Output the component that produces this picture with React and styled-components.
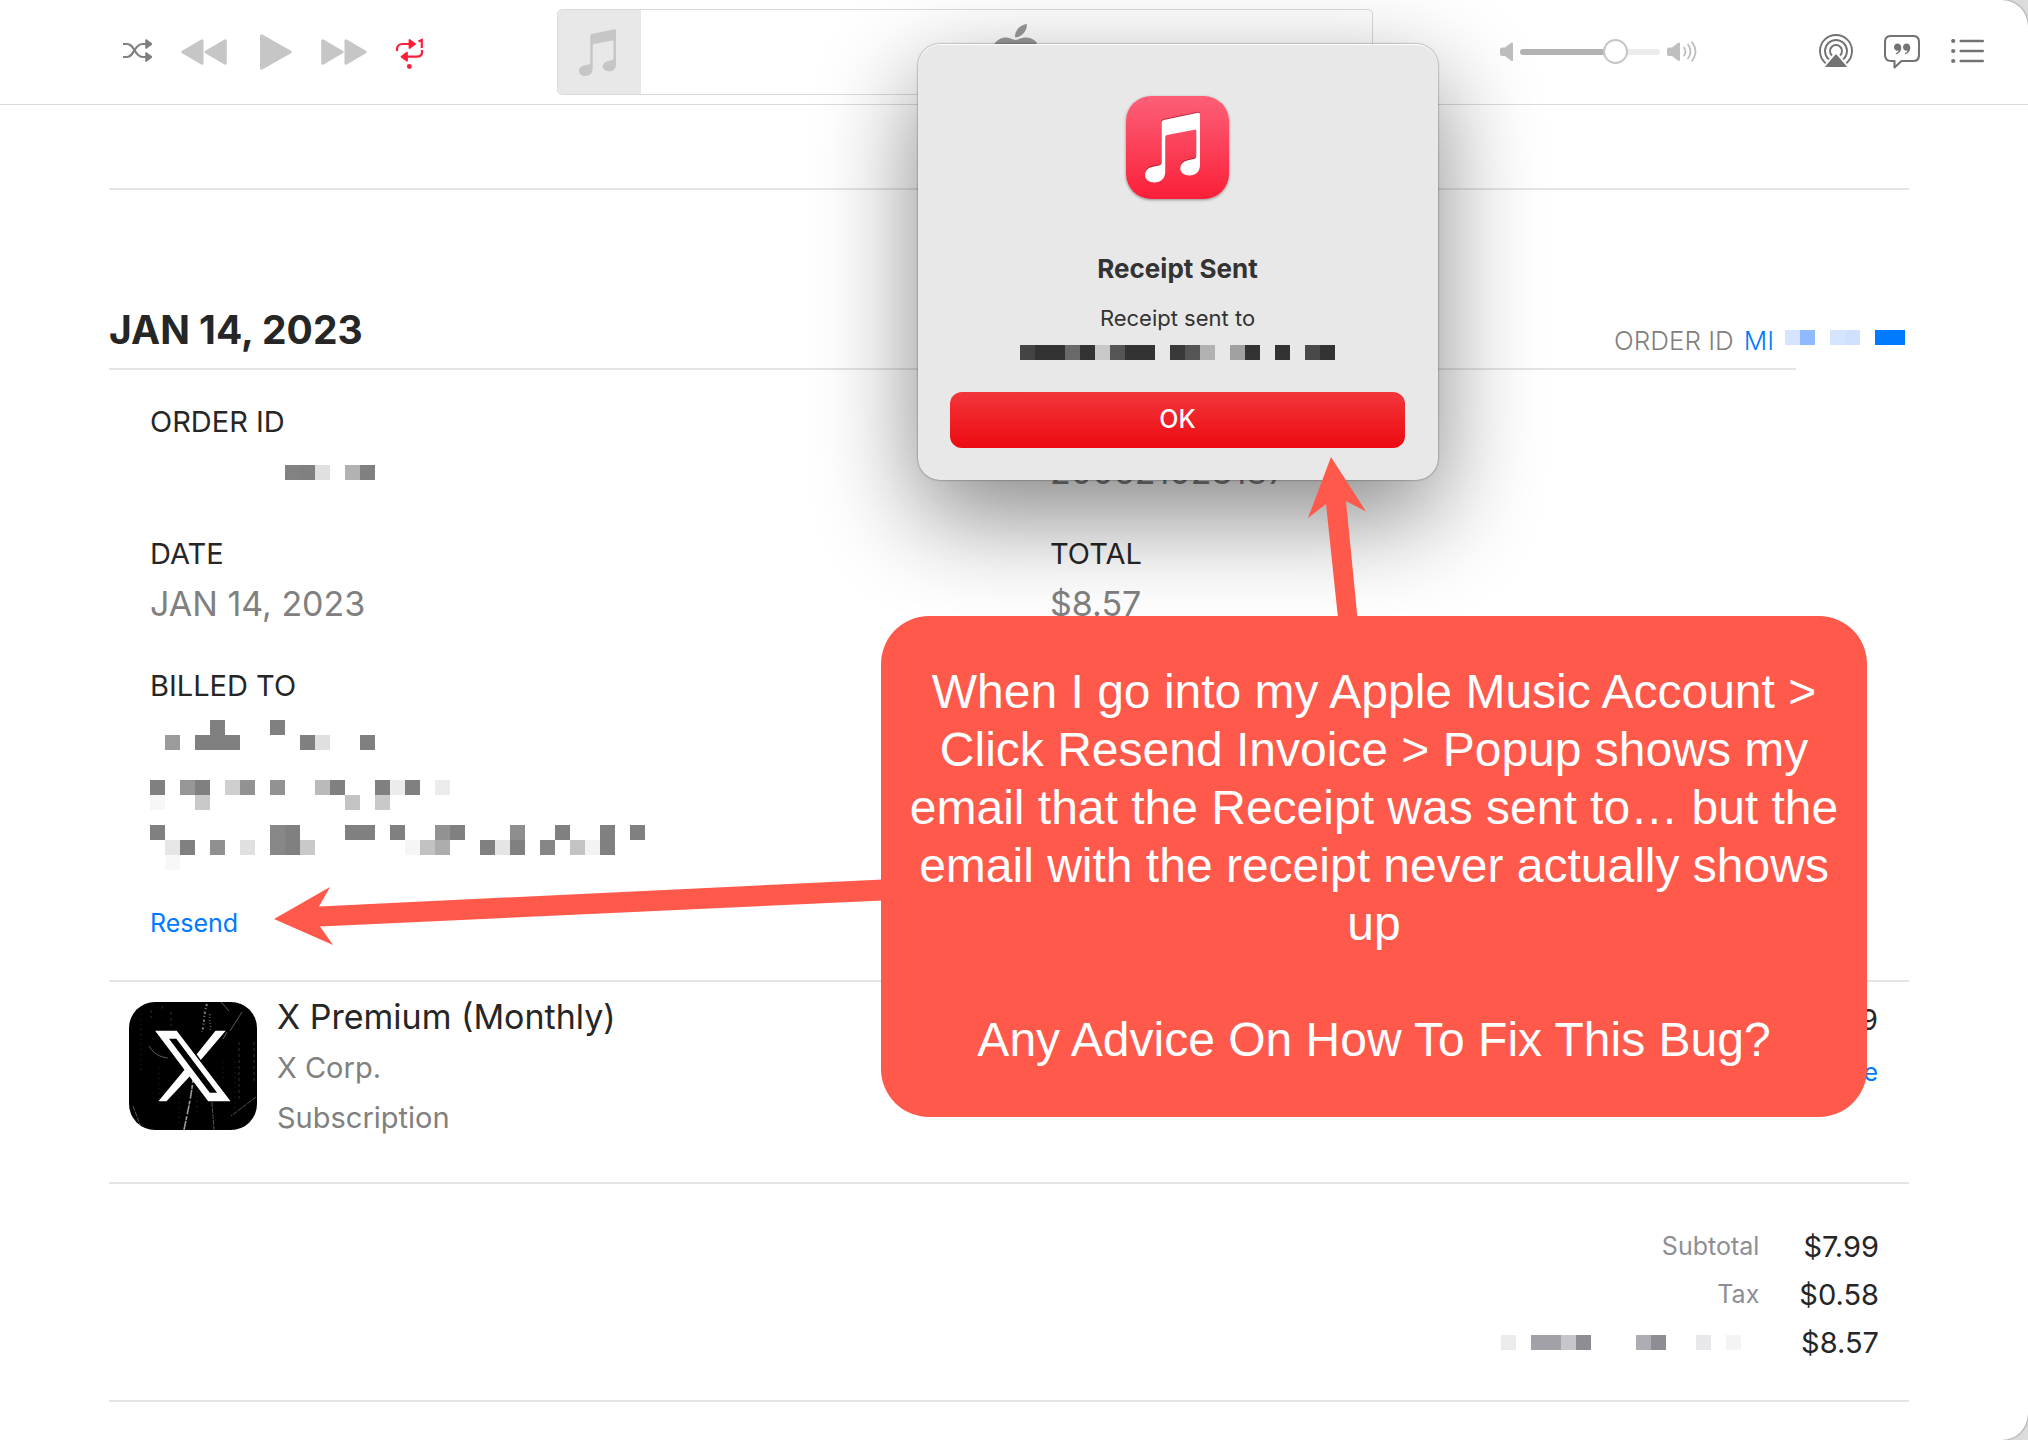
import React from 'react';
import styled, { createGlobalStyle } from 'styled-components';
import { FaApple } from 'react-icons/fa';

const colours = {
  text: '#262626',
  grey: '#808080',
  label: '#8e8e93',
  rule: '#e5e5e5',
  link: '#007aff',
  red: '#fc1f3a',
  control: '#c6c6c6',
  icon: '#737373',
  callout: '#ff594b',
};

const GlobalStyle = createGlobalStyle`
  * {
    box-sizing: border-box;
  }

  body {
    margin: 0;
    background-color: #dcdcdc;
    color: ${colours.text};
    font-family: Inter, "Liberation Sans", sans-serif;
  }

  p, h1, h2, h3, dl, dt, dd {
    margin: 0;
    font-weight: 400;
  }
`;

const Window = styled.div`
  position: relative;
  min-height: 100vh;
  overflow: hidden;
  background-color: white;
  border-radius: 0 26px 26px 0;
  box-shadow: 0 0 2px rgba(0, 0, 0, 0.6);
`;

/* ---------- toolbar ---------- */

const Toolbar = styled.header`
  display: flex;
  align-items: center;
  height: 105px;
  padding: 0 44px 0 123px;
  border-bottom: 1px solid #dadada;
`;

const ButtonGroup = styled.div`
  display: flex;
  align-items: center;
  gap: ${({ $gap }) => $gap}px;
`;

const IconButton = styled.button`
  display: flex;
  padding: 0;
  border: 0;
  background: none;
  color: ${({ $colour }) => $colour || colours.control};
`;

const Display = styled.div`
  display: flex;
  flex: 1;
  height: 86px;
  margin: 0 127px 0 133px;
  border: 1px solid #dadada;
  border-radius: 5px;
  overflow: hidden;
`;

const Artwork = styled.div`
  display: flex;
  align-items: center;
  justify-content: center;
  width: 83px;
  padding-right: 4px;
  background-color: #e8e8e8;
  color: ${colours.control};
`;

const Screen = styled.div`
  display: flex;
  flex: 1;
  align-items: center;
  justify-content: center;
  padding-left: 16px;
  color: #999;
`;

const Volume = styled.div`
  display: flex;
  align-items: center;
  gap: 7px;
  margin-right: 122px;
  color: #bfbfbf;
`;

const VolumeSlider = styled.input`
  appearance: none;
  width: 140px;
  height: 25px;
  margin: 0;
  background: none;

  &::-webkit-slider-runnable-track {
    height: 6px;
    border-radius: 3px;
    background: linear-gradient(to right, #b3b3b3 68%, #ececec 68%);
  }

  &::-webkit-slider-thumb {
    appearance: none;
    width: 25px;
    height: 25px;
    margin-top: -10px;
    border: 2px solid ${colours.control};
    border-radius: 50%;
    background-color: white;
  }
`;

const ShuffleIcon = () => (
  <svg width="29" height="26" viewBox="0 0 29 26" fill="none" stroke="currentColor" strokeWidth="2.200">
    <path d="M0 5h4c3.500 0 5 2 7.500 6.300S16 18 19.500 18H23" />
    <path d="M0 18h4c3.500 0 5-2.400 7.500-6.700S16 5 19.500 5H23" />
    <path d="M23 1l5.500 4-5.500 4zM23 14l5.500 4-5.500 4z" fill="currentColor" strokeWidth="1.600" strokeLinejoin="round" />
  </svg>
);

const RewindIcon = () => (
  <svg width="46" height="26" viewBox="0 0 46 26" fill="currentColor" stroke="currentColor" strokeWidth="3" strokeLinejoin="round">
    <path d="M1.800 13L21 1.700v22.600zM25 13L44.300 1.700v22.600z" />
  </svg>
);

const PlayIcon = () => (
  <svg width="36" height="36" viewBox="0 0 36 36" fill="currentColor" stroke="currentColor" strokeWidth="3" strokeLinejoin="round">
    <path d="M5.500 1.700v32.600L34.300 18z" />
  </svg>
);

const ForwardIcon = () => (
  <svg width="46" height="26" viewBox="0 0 46 26" fill="currentColor" stroke="currentColor" strokeWidth="3" strokeLinejoin="round">
    <path d="M44.200 13L25 1.700v22.600zM21 13L1.700 1.700v22.600z" />
  </svg>
);

const RepeatOneIcon = () => (
  <svg width="28" height="34" viewBox="0 -4 28 34" fill="none" stroke="currentColor" strokeWidth="2.200">
    <path d="M1 12v-1.500C1 7 3 5 6.500 5H14" />
    <path d="M26 11v2c0 3-1.500 4.700-5 4.700H10" />
    <path d="M13.500 1l5.500 4-5.500 4zM11 13.700v8l-5.500-4z" fill="currentColor" strokeWidth="1.800" strokeLinejoin="round" />
    <path d="M22.500 2.600L25.800 1v8" />
    <circle cx="13.300" cy="27.500" r="2.400" fill="currentColor" stroke="none" />
  </svg>
);

const NoteIcon = ({ width, height, fill = 'currentColor' }) => (
  <svg width={width} height={height} viewBox="0 0 55 70" fill={fill}>
    <path d="M16.700 10Q16.700 8 18.700 7.500L53 .3Q55 0 55 2V52C55 59 51 63 44.500 63C39 63 35.300 60 35.300 56C35.300 51 39 48.500 44 47.500L48.500 46.600Q51.300 46 51.300 43V18.500Q51.300 16.800 49.500 17.200L22 22.400Q20.300 22.700 20.300 24.500V58.500C20.300 66 16 70 9.500 70C4 70 0 67 0 62.500C0 57.500 3.500 55 9 54L14 53Q16.700 52.400 16.700 49.500Z" />
  </svg>
);

const speakerPath = 'M0 7.500Q0 5.500 2 5.500H5L11.500 .5Q13 0 13 1.500V18Q13 19.500 11.500 19L5 14H2Q0 14 0 12Z';

const SpeakerIcon = () => (
  <svg width="13" height="20" viewBox="0 0 13 20" fill="currentColor">
    <path d={speakerPath} />
  </svg>
);

const SpeakerLoudIcon = () => (
  <svg width="30" height="22" viewBox="0 -1 30 22" fill="currentColor">
    <path d={speakerPath} />
    <g fill="none" stroke="currentColor" strokeWidth="1.800" strokeLinecap="round">
      <path d="M17 5.500q3 4 0 8" />
      <path d="M21 2.500q5 7 0 14" />
      <path d="M25 0q7 9.500 0 19" />
    </g>
  </svg>
);

const AirPlayIcon = () => (
  <svg width="34" height="36" viewBox="0 0 34 36" fill="none" stroke="currentColor" strokeWidth="1.900">
    <circle cx="17" cy="17" r="16" />
    <circle cx="17" cy="17" r="11" />
    <circle cx="17" cy="17" r="6" />
    <path d="M17 16.500L32 35H2z" fill="white" stroke="none" />
    <path d="M17 21l10 11.500H7z" fill="currentColor" strokeWidth="1.200" strokeLinejoin="round" />
  </svg>
);

const LyricsIcon = () => (
  <svg width="36" height="34" viewBox="0 0 36 34" fill="none" stroke="currentColor" strokeWidth="2.100" strokeLinejoin="round">
    <path d="M7 1h22q6 0 6 6v13q0 6-6 6H17.500l-7 6.500V26H7q-6 0-6-6V7q0-6 6-6z" />
    <g fill="currentColor" stroke="none">
      <path d="M13.600 8.600c2.200 0 3.700 1.800 3.700 4.200 0 3.400-2.200 5.700-5.200 6.500l-.5-.9c1.600-.7 2.700-1.600 3-2.900-2.500.6-4.600-1-4.600-3.300 0-2.100 1.500-3.600 3.600-3.600z" />
      <path d="M22.600 8.600c2.200 0 3.700 1.800 3.700 4.200 0 3.400-2.200 5.700-5.200 6.500l-.5-.9c1.600-.7 2.700-1.600 3-2.900-2.500.6-4.600-1-4.600-3.300 0-2.100 1.500-3.600 3.600-3.600z" />
    </g>
  </svg>
);

const QueueIcon = () => (
  <svg width="33" height="26" viewBox="0 0 33 26" fill="currentColor">
    {[2, 12, 22].map((y) => (
      <g key={y}>
        <circle cx="2.200" cy={y} r="2.100" />
        <rect x="8.500" y={y - 1.2} width="24.500" height="2.400" rx="1.200" />
      </g>
    ))}
  </svg>
);

/* ---------- redacted text ---------- */

const MosaicGrid = styled.div`
  display: grid;
  grid-template-columns: repeat(${({ $columns }) => $columns}, 15px);
  grid-auto-rows: 15px;
`;

const MosaicCell = styled.span`
  grid-column: ${({ $column }) => $column + 1};
  grid-row: ${({ $row }) => $row + 1};
  background-color: ${({ $colour }) => $colour};
`;

// every row maps a column index to the colour of its cell
function Mosaic({ rows, columns, className }) {
  return (
    <MosaicGrid $columns={columns} className={className} aria-hidden="true">
      {rows.map((row, y) => Object.entries(row).map(([x, colour]) => (
        <MosaicCell key={`${x}-${y}`} $column={Number(x)} $row={y} $colour={colour} />
      )))}
    </MosaicGrid>
  );
}

const g = colours.grey;

const orderIdCells = [{ 9: '#828282', 10: g, 11: '#e0e0e0', 13: '#b2b2b2', 14: g }];

const orderLinkCells = [{
  1: '#d6e5ff', 2: '#8fbaff', 4: '#d6e5ff', 5: '#d0e1ff', 7: '#007aff', 8: '#007aff',
}];

const billedToCells = [
  { 4: g, 8: g },
  { 1: '#9b9b9b', 3: g, 4: g, 5: g, 10: g, 11: '#e0e0e0', 14: g },
  {},
  {},
  {
    0: g, 2: '#969696', 3: g, 5: '#cfcfcf', 6: '#929292', 8: '#929292', 11: '#bababa', 12: g, 15: g, 16: '#ececec', 17: g, 19: '#ebebeb',
  },
  { 0: '#f7f7f7', 3: '#c9c9c9', 13: '#c3c3c3', 15: '#c9c9c9' },
  {},
  {
    0: g, 8: '#878787', 9: g, 13: g, 14: g, 16: g, 19: '#929292', 20: g, 24: '#8e8e8e', 27: g, 30: g, 32: g,
  },
  {
    1: '#e6e6e6', 2: g, 4: '#909090', 6: '#e0e0e0', 8: '#878787', 9: g, 10: '#c9c9c9', 17: '#f6f6f6', 18: '#c2c2c2', 19: '#adadad', 22: g, 23: '#e5e5e5', 24: g, 26: '#868686', 28: '#c3c3c3', 29: '#f3f3f3', 30: g,
  },
  { 1: '#f8f8f8' },
];

const emailCells = [{
  0: '#444', 1: '#333', 2: '#333', 3: '#696969', 4: '#333', 5: '#c8c8c8', 6: '#555', 7: '#333', 8: '#333', 10: '#393939', 11: '#555', 12: '#b2b2b2', 14: '#a0a0a0', 15: '#333', 17: '#333', 19: '#494949', 20: '#333',
}];

const paidCells = [{
  0: '#ebebec', 2: '#a2a1a8', 3: '#a2a1a8', 4: '#c7c7cb', 5: '#8e8d93', 9: '#aeadb3', 10: '#8e8d93', 13: '#e8e8ea', 15: '#f4f4f4',
}];

/* ---------- receipt ---------- */

const Receipt = styled.main`
  padding: 83px 119px 38px 109px;
`;

const Rule = styled.hr`
  height: 2px;
  margin: 0 ${({ $inset }) => $inset || 0}px 0 0;
  border: 0;
  background-color: ${colours.rule};
`;

const ReceiptHeader = styled.div`
  display: flex;
  align-items: flex-end;
  justify-content: space-between;
  height: 178px;
  padding: 0 4px 8px 0;
`;

const ReceiptDate = styled.h1`
  font-size: 39px;
  font-weight: 700;
  line-height: 60px;
`;

const OrderNumber = styled.p`
  display: flex;
  color: ${colours.grey};
  font-size: 26px;
  font-weight: 300;
  line-height: 38px;
`;

const OrderLink = styled.a`
  display: flex;
  margin-left: 10px;
  color: ${colours.link};
  text-decoration: none;

  ${MosaicGrid} {
    margin: 8px 0 0 -4px;
  }
`;

const Details = styled.dl`
  display: grid;
  grid-template-columns: 1fr 1fr;
  row-gap: 36px;
  padding: 32px 0 32px;
`;

const Field = styled.div`
  padding-left: 41px;
`;

const FieldLabel = styled.dt`
  font-size: 29px;
  line-height: 40px;
`;

const FieldValue = styled.dd`
  display: flex;
  align-items: center;
  min-height: 52px;
  margin-top: 4px;
  color: ${colours.grey};
  font-size: 34px;
  line-height: 52px;
`;

const Address = styled.dd`
  padding-top: 14px;
`;

const TextLink = styled.a`
  color: ${colours.link};
  font-size: 25px;
  line-height: ${({ $tall }) => ($tall ? 52 : 40)}px;
  text-decoration: none;
`;

const ResendRow = styled.div`
  padding: 1px 0 37px 41px;
`;

const Item = styled.section`
  display: flex;
  align-items: flex-start;
  gap: 20px;
  padding: 9px 31px 39px 20px;
`;

const ItemIcon = styled.svg`
  width: 128px;
  height: 128px;
  margin-top: 11px;
  border-radius: 26px;
`;

const ItemText = styled.div`
  flex: 1;
`;

const ItemTitle = styled.h2`
  font-size: 34px;
  line-height: 52px;
`;

const ItemNote = styled.p`
  color: ${colours.grey};
  font-size: 29px;
  line-height: 50px;
`;

const ItemPrice = styled.div`
  display: flex;
  flex-direction: column;
  align-items: flex-end;
  padding-top: 3px;
  font-size: 29px;
  line-height: 52px;
`;

const Totals = styled.table`
  margin: 38px 30px 34px auto;
  border-spacing: 0;

  th, td {
    height: 48px;
    padding: 0;
    text-align: right;
    font-weight: 400;
  }

  th {
    color: ${colours.label};
    font-size: 25px;
  }

  td {
    padding-left: 40px;
    font-size: 29px;
  }

  ${MosaicGrid} {
    width: 258px;
  }
`;

const XIcon = () => (
  <ItemIcon viewBox="0 0 128 128" role="img" aria-label="X">
    <rect width="128" height="128" fill="black" />
    <g fill="none" stroke="white" strokeWidth="0.800">
      <path d="M55 128C59 108 62 96 64 78" opacity="0.600" strokeWidth="1.600" strokeDasharray="9 1 4 2" />
      <path d="M78 2C74 14 76 20 73 30" opacity="0.500" strokeWidth="2" strokeDasharray="2 2 1 3" />
      <path d="M81 12C79 20 84 24 80 29" opacity="0.400" strokeWidth="1.500" strokeDasharray="1 2" />
      <path d="M92 0l8 9M113 10L101 29M98 30l-4 7" opacity="0.450" />
      <path d="M20 44c4 7 10 11 19 12" opacity="0.450" />
      <path d="M127 95L102 114M83 100l2 28M4 104l9 24" opacity="0.400" strokeDasharray="5 1" />
      <path d="M22 8v8M42 10v14M34 4l-3 5M122 8v6M125 40v40M110 40v60" opacity="0.250" strokeDasharray="3 3" />
      <path d="M12 12v60M30 66v40M50 80v44M94 60v20M106 60v50M68 84v30" opacity="0.200" strokeDasharray="1 4" />
    </g>
    <path fill="white" d="M86.500 28.700H96.700L71.800 58L67.700 52.300ZM58 64.700L62 73L37.500 99.300H29.400Z" />
    <path fill="white" fillRule="evenodd" d="M26.100 28.700H47.700L101.600 99.300H79.200ZM40 36.700L80.800 90.700H88.100L47.300 36.700Z" />
  </ItemIcon>
);

/* ---------- dialog ---------- */

const Dialog = styled.div`
  position: absolute;
  top: 44px;
  left: 918px;
  display: flex;
  flex-direction: column;
  align-items: center;
  width: 520px;
  padding: 52px 33px 32px 32px;
  border-radius: 22px;
  background-color: #e8e8e8;
  box-shadow: 0 0 2px rgba(0, 0, 0, 0.6), 0 36px 100px rgba(0, 0, 0, 0.48), inset 0 1px 1px white;
  color: #333;
`;

const MusicAppIcon = styled.div`
  display: flex;
  align-items: center;
  justify-content: center;
  width: 103px;
  height: 103px;
  padding-right: 10px;
  border-radius: 25px;
  background: linear-gradient(#fd5f77, #fb4a62 35%, #fb1f38);
  box-shadow: 0 1px 3px rgba(0, 0, 0, 0.4);

  svg {
    filter: drop-shadow(0 -1px 0 rgba(120, 0, 20, 0.5));
  }
`;

const DialogTitle = styled.h3`
  margin-top: 54px;
  font-size: 26px;
  font-weight: 700;
  line-height: 32px;
`;

const DialogText = styled.p`
  margin: 17px 0 11px;
  font-size: 22px;
  line-height: 32px;
`;

const OkButton = styled.button`
  align-self: stretch;
  height: 56px;
  margin-top: 32px;
  padding: 0 0 2px;
  border: 0;
  border-radius: 12px;
  background: linear-gradient(#f2363b, #ed0a10);
  color: white;
  font-family: inherit;
  font-size: 25px;
  font-weight: 500;
`;

/* ---------- callout ---------- */

const Callout = styled.aside`
  position: absolute;
  top: 616px;
  left: 881px;
  width: 986px;
  padding: 47px 24px 48px;
  border-radius: 48px;
  background-color: ${colours.callout};
  color: white;
  font-family: "Liberation Sans", Arial, sans-serif;
  font-size: 48px;
  line-height: 58px;
  text-align: center;

  p + p {
    margin-top: 58px;
  }
`;

const Arrows = styled.svg`
  position: absolute;
  top: 0;
  left: 0;
  width: 100%;
  height: 100%;
  overflow: visible;
  fill: ${colours.callout};
  pointer-events: none;
`;

function PlayerToolbar() {
  return (
    <Toolbar>
      <ButtonGroup $gap={29}>
        <IconButton $colour="#7f7f7f" aria-label="Shuffle"><ShuffleIcon /></IconButton>
        <IconButton aria-label="Previous"><RewindIcon /></IconButton>
        <IconButton aria-label="Play"><PlayIcon /></IconButton>
        <IconButton aria-label="Next"><ForwardIcon /></IconButton>
        <IconButton $colour={colours.red} aria-label="Repeat one"><RepeatOneIcon /></IconButton>
      </ButtonGroup>
      <Display>
        <Artwork><NoteIcon width={37} height={47} /></Artwork>
        <Screen><FaApple size={64} /></Screen>
      </Display>
      <Volume>
        <SpeakerIcon />
        <VolumeSlider type="range" min="0" max="100" defaultValue="72" aria-label="Volume" />
        <SpeakerLoudIcon />
      </Volume>
      <ButtonGroup $gap={31}>
        <IconButton $colour={colours.icon} aria-label="AirPlay"><AirPlayIcon /></IconButton>
        <IconButton $colour={colours.icon} aria-label="Lyrics"><LyricsIcon /></IconButton>
        <IconButton $colour={colours.icon} aria-label="Queue"><QueueIcon /></IconButton>
      </ButtonGroup>
    </Toolbar>
  );
}

function App() {
  return (
    <Window>
      <GlobalStyle />
      <PlayerToolbar />

      <Receipt>
        <Rule />
        <ReceiptHeader>
          <ReceiptDate>JAN 14, 2023</ReceiptDate>
          <OrderNumber>
            ORDER ID
            <OrderLink href="#order">
              MI
              <Mosaic rows={orderLinkCells} columns={9} />
            </OrderLink>
          </OrderNumber>
        </ReceiptHeader>
        <Rule $inset={113} />

        <Details>
          <Field>
            <FieldLabel>ORDER ID</FieldLabel>
            <FieldValue><Mosaic rows={orderIdCells} columns={15} /></FieldValue>
          </Field>
          <Field>
            <FieldLabel>DOC</FieldLabel>
            <FieldValue>200621023187</FieldValue>
          </Field>
          <Field>
            <FieldLabel>DATE</FieldLabel>
            <FieldValue>JAN 14, 2023</FieldValue>
          </Field>
          <Field>
            <FieldLabel>TOTAL</FieldLabel>
            <FieldValue>$8.57</FieldValue>
          </Field>
          <Field>
            <FieldLabel>BILLED TO</FieldLabel>
            <Address><Mosaic rows={billedToCells} columns={33} /></Address>
          </Field>
        </Details>
        <ResendRow>
          <TextLink href="#resend">Resend</TextLink>
        </ResendRow>

        <Rule />
        <Item>
          <XIcon />
          <ItemText>
            <ItemTitle>X Premium (Monthly)</ItemTitle>
            <ItemNote>X Corp.</ItemNote>
            <ItemNote>Subscription</ItemNote>
          </ItemText>
          <ItemPrice>
            <span>$7.99</span>
            <TextLink $tall href="#manage">Manage</TextLink>
          </ItemPrice>
        </Item>

        <Rule />
        <Totals>
          <tbody>
            <tr>
              <th scope="row">Subtotal</th>
              <td>$7.99</td>
            </tr>
            <tr>
              <th scope="row">Tax</th>
              <td>$0.58</td>
            </tr>
            <tr>
              <th scope="row"><Mosaic rows={paidCells} columns={17} /></th>
              <td>$8.57</td>
            </tr>
          </tbody>
        </Totals>
        <Rule />
      </Receipt>

      <Dialog role="dialog" aria-labelledby="dialog-title">
        <MusicAppIcon><NoteIcon width={55} height={71} fill="white" /></MusicAppIcon>
        <DialogTitle id="dialog-title">Receipt Sent</DialogTitle>
        <DialogText>Receipt sent to</DialogText>
        <Mosaic rows={emailCells} columns={21} />
        <OkButton>OK</OkButton>
      </Dialog>

      <Callout>
        <Arrows aria-hidden="true">
          <path d="M450 -159L485 -104.500L465 -115L476.500 2H457L445 -112L427 -98Z" />
          <path d="M-607 303L-551 271L-562 290.500L2 263.500V284.500L-561 310.500L-548 329Z" />
        </Arrows>
        <p>
          When I go into my Apple Music Account &gt; Click Resend Invoice &gt; Popup
          shows my email that the Receipt was sent to… but the email with the
          receipt never actually shows up
        </p>
        <p>Any Advice On How To Fix This Bug?</p>
      </Callout>
    </Window>
  );
}

export default App;
